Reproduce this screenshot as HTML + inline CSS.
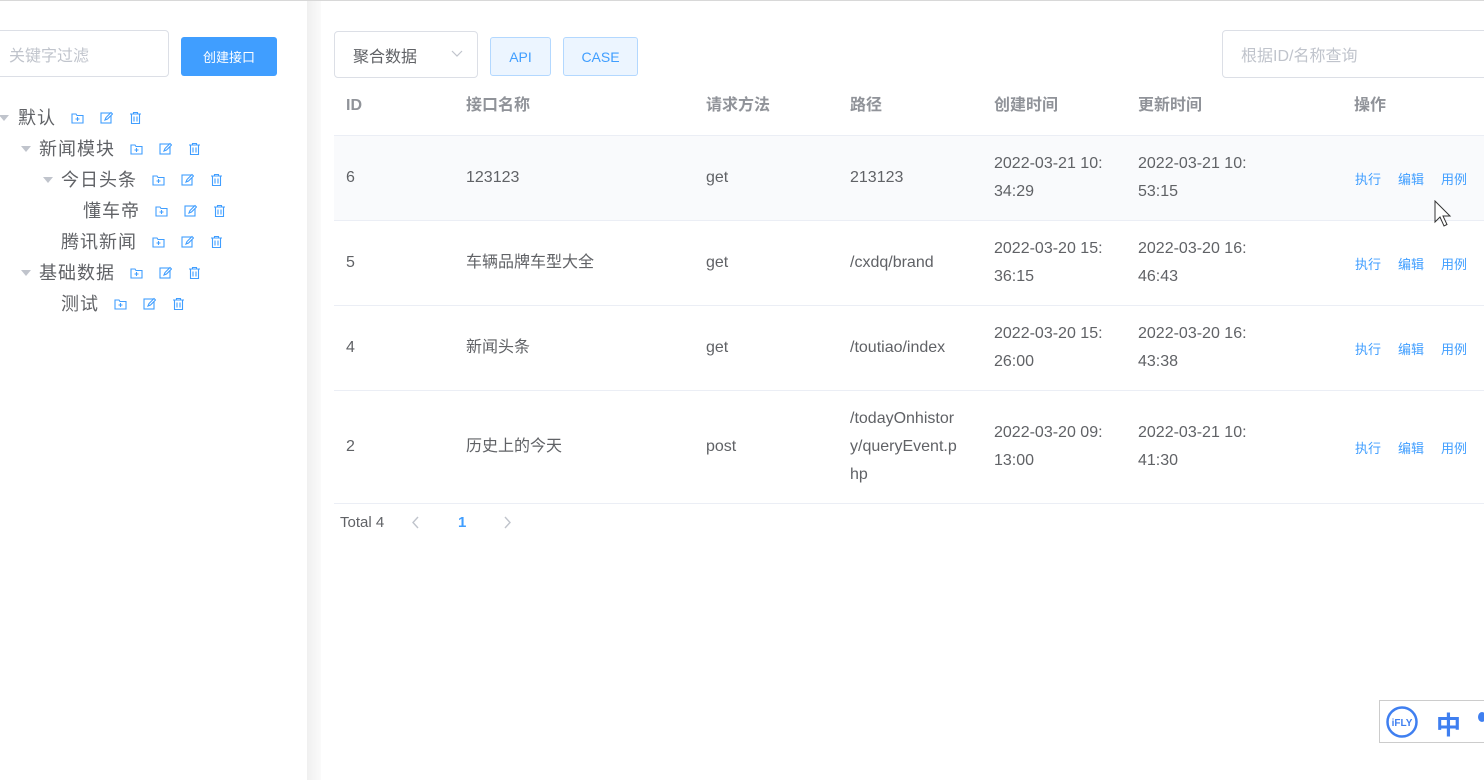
<!DOCTYPE html>
<html><head><meta charset="utf-8"><style>
*{box-sizing:border-box;margin:0;padding:0}
body{width:1484px;height:780px;overflow:hidden;background:#fff;font-family:"Liberation Sans","Noto Sans CJK SC",sans-serif;position:relative;color:#606266}
.abs{position:absolute}
.topline{left:0;top:0;width:1484px;height:1px;background:#d8d8d8}
.side{left:0;top:1px;width:307px;height:779px;background:#fff}
.shadow{left:307px;top:1px;width:14px;height:779px;background:linear-gradient(90deg,#f0f0f0,#fafafa)}
.inp{border:1px solid #dcdfe6;border-radius:4px;background:#fff;color:#c0c4cc;font-size:16px;display:flex;align-items:center}
.btn{background:#409eff;color:#fff;font-size:13px;border-radius:3px;display:flex;align-items:center;justify-content:center}
.node{font-size:18px;color:#606266;display:flex;align-items:center;height:24px;white-space:nowrap;letter-spacing:1px}
.tri{width:0;height:0;border-left:5px solid transparent;border-right:5px solid transparent;border-top:6px solid #c0c4cc;position:absolute}
.ic{display:inline-block;width:13px;height:13px;margin-left:16px}
.ic:first-child{margin-left:0}
.th{font-size:16px;font-weight:bold;color:#909399;top:97px;line-height:18px}
.td{font-size:16px;color:#606266;line-height:28px}
.hr{left:334px;width:1150px;height:1px;background:#ebeef5}
.op{font-size:13px;color:#409eff}
</style></head><body>
<div class="abs topline"></div>
<div class="abs side"></div>
<div class="abs shadow"></div>

<div class="abs inp" style="left:-8px;top:30px;width:177px;height:47px;padding-left:16px">关键字过滤</div>
<div class="abs btn" style="left:181px;top:37px;width:96px;height:39px">创建接口</div>

<svg width="0" height="0" style="position:absolute"><defs>
<g id="fa"><path d="M1 3h4l1 1.5h6v7.5H1z" fill="none" stroke="#409eff" stroke-width="1.1"/><path d="M6.5 6v4M4.5 8h4" stroke="#409eff" stroke-width="1.1"/></g>
<g id="ed"><rect x="1" y="2" width="10" height="10" fill="none" stroke="#409eff" stroke-width="1.1"/><path d="M5 9l1-2.5 5-5 1.5 1.5-5 5z" fill="#fff" stroke="#409eff" stroke-width="1.1"/></g>
<g id="dl"><path d="M1 3h11M4.5 3V1.5h4V3M2.5 3v9.5h8V3M5 5.5v5M8 5.5v5" fill="none" stroke="#409eff" stroke-width="1.1"/></g>
</defs></svg>

<!-- tree -->
<div class="tri" style="left:-1px;top:115px"></div>
<div class="abs node" style="left:18px;top:105px">默认<span style="margin-left:15px;display:flex"><svg class="ic" viewBox="0 0 13 13"><use href="#fa"/></svg><svg class="ic" viewBox="0 0 13 13"><use href="#ed"/></svg><svg class="ic" viewBox="0 0 13 13"><use href="#dl"/></svg></span></div>
<div class="tri" style="left:21px;top:146px"></div>
<div class="abs node" style="left:39px;top:136px">新闻模块<span style="margin-left:15px;display:flex"><svg class="ic" viewBox="0 0 13 13"><use href="#fa"/></svg><svg class="ic" viewBox="0 0 13 13"><use href="#ed"/></svg><svg class="ic" viewBox="0 0 13 13"><use href="#dl"/></svg></span></div>
<div class="tri" style="left:43px;top:177px"></div>
<div class="abs node" style="left:61px;top:167px">今日头条<span style="margin-left:15px;display:flex"><svg class="ic" viewBox="0 0 13 13"><use href="#fa"/></svg><svg class="ic" viewBox="0 0 13 13"><use href="#ed"/></svg><svg class="ic" viewBox="0 0 13 13"><use href="#dl"/></svg></span></div>
<div class="abs node" style="left:83px;top:198px">懂车帝<span style="margin-left:15px;display:flex"><svg class="ic" viewBox="0 0 13 13"><use href="#fa"/></svg><svg class="ic" viewBox="0 0 13 13"><use href="#ed"/></svg><svg class="ic" viewBox="0 0 13 13"><use href="#dl"/></svg></span></div>
<div class="abs node" style="left:61px;top:229px">腾讯新闻<span style="margin-left:15px;display:flex"><svg class="ic" viewBox="0 0 13 13"><use href="#fa"/></svg><svg class="ic" viewBox="0 0 13 13"><use href="#ed"/></svg><svg class="ic" viewBox="0 0 13 13"><use href="#dl"/></svg></span></div>
<div class="tri" style="left:21px;top:270px"></div>
<div class="abs node" style="left:39px;top:260px">基础数据<span style="margin-left:15px;display:flex"><svg class="ic" viewBox="0 0 13 13"><use href="#fa"/></svg><svg class="ic" viewBox="0 0 13 13"><use href="#ed"/></svg><svg class="ic" viewBox="0 0 13 13"><use href="#dl"/></svg></span></div>
<div class="abs node" style="left:61px;top:291px">测试<span style="margin-left:15px;display:flex"><svg class="ic" viewBox="0 0 13 13"><use href="#fa"/></svg><svg class="ic" viewBox="0 0 13 13"><use href="#ed"/></svg><svg class="ic" viewBox="0 0 13 13"><use href="#dl"/></svg></span></div>

<!-- toolbar -->
<div class="abs inp" style="left:334px;top:31px;width:144px;height:47px;padding-left:18px;color:#606266">聚合数据
<svg class="abs" style="left:116px;top:18px" width="12" height="8" viewBox="0 0 12 8"><path d="M1 1l5 5 5-5" fill="none" stroke="#c0c4cc" stroke-width="1.2"/></svg></div>
<div class="abs" style="left:490px;top:37px;width:61px;height:39px;background:#ecf5ff;border:1px solid #b3d8ff;border-radius:3px;color:#409eff;font-size:14px;display:flex;align-items:center;justify-content:center">API</div>
<div class="abs" style="left:563px;top:37px;width:75px;height:39px;background:#ecf5ff;border:1px solid #b3d8ff;border-radius:3px;color:#409eff;font-size:14px;display:flex;align-items:center;justify-content:center">CASE</div>
<div class="abs inp" style="left:1222px;top:30px;width:280px;height:48px;padding-left:18px">根据ID/名称查询</div>

<!-- table header -->
<div class="abs th" style="left:346px">ID</div>
<div class="abs th" style="left:466px">接口名称</div>
<div class="abs th" style="left:706px">请求方法</div>
<div class="abs th" style="left:850px">路径</div>
<div class="abs th" style="left:994px">创建时间</div>
<div class="abs th" style="left:1138px">更新时间</div>
<div class="abs th" style="left:1354px">操作</div>
<div class="abs hr" style="top:135px"></div>
<div class="abs" style="left:334px;top:136px;width:1150px;height:84px;background:#f9fafc"></div>
<div class="abs hr" style="top:220px"></div>
<div class="abs hr" style="top:305px"></div>
<div class="abs hr" style="top:390px"></div>
<div class="abs hr" style="top:503px"></div>

<!-- row 1 -->
<div class="abs td" style="left:346px;top:164px">6</div>
<div class="abs td" style="left:466px;top:164px">123123</div>
<div class="abs td" style="left:706px;top:164px">get</div>
<div class="abs td" style="left:850px;top:164px">213123</div>
<div class="abs td" style="left:994px;top:150px">2022-03-21 10:<br>34:29</div>
<div class="abs td" style="left:1138px;top:150px">2022-03-21 10:<br>53:15</div>
<div class="abs op" style="left:1355px;top:169px">执行</div><div class="abs op" style="left:1398px;top:169px">编辑</div><div class="abs op" style="left:1441px;top:169px">用例</div>
<!-- row 2 -->
<div class="abs td" style="left:346px;top:249px">5</div>
<div class="abs td" style="left:466px;top:249px">车辆品牌车型大全</div>
<div class="abs td" style="left:706px;top:249px">get</div>
<div class="abs td" style="left:850px;top:249px">/cxdq/brand</div>
<div class="abs td" style="left:994px;top:235px">2022-03-20 15:<br>36:15</div>
<div class="abs td" style="left:1138px;top:235px">2022-03-20 16:<br>46:43</div>
<div class="abs op" style="left:1355px;top:254px">执行</div><div class="abs op" style="left:1398px;top:254px">编辑</div><div class="abs op" style="left:1441px;top:254px">用例</div>
<!-- row 3 -->
<div class="abs td" style="left:346px;top:334px">4</div>
<div class="abs td" style="left:466px;top:334px">新闻头条</div>
<div class="abs td" style="left:706px;top:334px">get</div>
<div class="abs td" style="left:850px;top:334px">/toutiao/index</div>
<div class="abs td" style="left:994px;top:320px">2022-03-20 15:<br>26:00</div>
<div class="abs td" style="left:1138px;top:320px">2022-03-20 16:<br>43:38</div>
<div class="abs op" style="left:1355px;top:339px">执行</div><div class="abs op" style="left:1398px;top:339px">编辑</div><div class="abs op" style="left:1441px;top:339px">用例</div>
<!-- row 4 -->
<div class="abs td" style="left:346px;top:433px">2</div>
<div class="abs td" style="left:466px;top:433px">历史上的今天</div>
<div class="abs td" style="left:706px;top:433px">post</div>
<div class="abs td" style="left:850px;top:405px">/todayOnhistor<br>y/queryEvent.p<br>hp</div>
<div class="abs td" style="left:994px;top:419px">2022-03-20 09:<br>13:00</div>
<div class="abs td" style="left:1138px;top:419px">2022-03-21 10:<br>41:30</div>
<div class="abs op" style="left:1355px;top:438px">执行</div><div class="abs op" style="left:1398px;top:438px">编辑</div><div class="abs op" style="left:1441px;top:438px">用例</div>

<!-- pagination -->
<div class="abs" style="left:340px;top:514px;font-size:15px;color:#606266">Total 4</div>
<svg class="abs" style="left:411px;top:516px" width="8" height="13" viewBox="0 0 8 13"><path d="M7 1L2 6.5 7 12" fill="none" stroke="#c0c4cc" stroke-width="1.4"/></svg>
<div class="abs" style="left:458px;top:514px;font-size:15px;font-weight:bold;color:#409eff">1</div>
<svg class="abs" style="left:504px;top:516px" width="8" height="13" viewBox="0 0 8 13"><path d="M1 1l5 5.5L1 12" fill="none" stroke="#c0c4cc" stroke-width="1.4"/></svg>

<!-- cursor -->
<svg class="abs" style="left:1434px;top:200px" width="20" height="30" viewBox="0 0 20 30"><path d="M1 1v21l5-5 4 9 3-1.5-4-8.5h7z" fill="#fff" stroke="#333" stroke-width="1"/></svg>

<!-- ifly -->
<div class="abs" style="left:1379px;top:700px;width:110px;height:43px;border:1px solid #ccc;background:#fff"></div>
<svg class="abs" style="left:1385px;top:705px" width="34" height="34" viewBox="0 0 34 34"><circle cx="17" cy="17" r="14.5" fill="none" stroke="#3f7ff0" stroke-width="2.5"/><text x="17" y="21" font-size="10" font-weight="bold" fill="#3f7ff0" text-anchor="middle" font-family="Liberation Sans">iFLY</text></svg>
<div class="abs" style="left:1436px;top:706px;font-size:25px;font-weight:bold;color:#3f7ff0">中</div>
<div class="abs" style="left:1478px;top:712px;width:8px;height:10px;border-radius:50%;background:#3f7ff0"></div>
</body></html>
